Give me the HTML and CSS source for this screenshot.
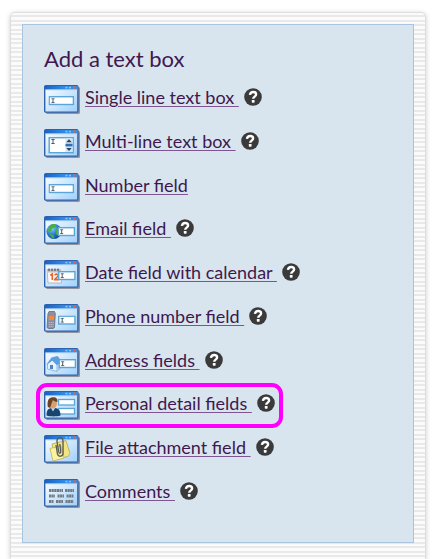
FILE: index.html
```html
<!DOCTYPE html>
<html lang="en">
<head>
    <meta charset="UTF-8">
    <meta name="viewport" content="width=device-width, initial-scale=1.0">
    <title>Add a text box</title>
    <link rel="stylesheet" href="styles.css">
</head>
<body>
    <!-- Shared icon parts -->
    <svg class="defs" width="0" height="0" aria-hidden="true">
        <defs>
            <linearGradient id="sky" x1="0" y1="0" x2="1" y2="1">
                <stop offset="0" stop-color="#ffffff"/>
                <stop offset="1" stop-color="#9fd0fb"/>
            </linearGradient>
            <linearGradient id="bar" x1="0" y1="0" x2="1" y2="0">
                <stop offset="0" stop-color="#1b62c4"/>
                <stop offset="0.6" stop-color="#2f8be8"/>
                <stop offset="1" stop-color="#3f8be0"/>
            </linearGradient>
            <radialGradient id="sea" cx="0.35" cy="0.3" r="0.8">
                <stop offset="0" stop-color="#8fd0f8"/>
                <stop offset="0.5" stop-color="#2a7fd0"/>
                <stop offset="1" stop-color="#0d3d8c"/>
            </radialGradient>
            <symbol id="window" viewBox="0 0 36 29">
                <rect x="2" y="2" width="34" height="27" rx="1.5" fill="#7c8089" opacity="0.8"/>
                <rect x="0.7" y="0.7" width="33.2" height="26.4" rx="1.2" fill="url(#sky)" stroke="#2f62ae" stroke-width="1.4"/>
                <rect x="1" y="1" width="32.6" height="3.6" fill="url(#bar)"/>
                <rect x="1.4" y="4.6" width="31.8" height="0.8" fill="#b9dcfa"/>
                <rect x="21.5" y="1.8" width="2" height="1.6" fill="#8cc4f6"/>
                <rect x="25" y="1.8" width="2" height="1.6" fill="#8cc4f6"/>
                <rect x="29" y="1.4" width="3" height="2.2" fill="#e3623c"/>
            </symbol>
            <symbol id="cursor" viewBox="0 0 4 5">
                <path d="M0.4 0.5h3.2M2 0.5v4M0.4 4.5h3.2" fill="none" stroke="#3c4652" stroke-width="0.9"/>
            </symbol>
            <symbol id="field" viewBox="0 0 26 10">
                <rect x="0.7" y="0.7" width="24.2" height="7.8" fill="#fff" stroke="#5ba6d8" stroke-width="1.4"/>
                <use href="#cursor" x="2.5" y="2.2" width="4" height="5"/>
            </symbol>
            <symbol id="small-field" viewBox="0 0 18 10">
                <rect x="0.7" y="0.7" width="16.2" height="7.8" fill="#fff" stroke="#5ba6d8" stroke-width="1.4"/>
                <use href="#cursor" x="2.2" y="2.2" width="4" height="5"/>
            </symbol>
            <symbol id="question" viewBox="0 0 18 18">
                <circle cx="9" cy="9" r="8.8" fill="#3a3a3a"/>
                <path d="M5.9 6.9C6.3 4.7 7.400 4 9.100 4c1.800 0 3 1 3 2.500 0 2.100-2.900 2.100-2.900 4.200" fill="none" stroke="#fff" stroke-width="2.400"/>
                <rect x="7.800" y="11.900" width="2.800" height="2.800" rx="0.600" fill="#fff"/>
            </symbol>
        </defs>
    </svg>

    <main class="card">
        <section class="panel">
            <h2>Add a text box</h2>
            <ul class="field-list">
                <li>
                    <svg class="icon" viewBox="0 0 36 29" aria-hidden="true">
                        <use href="#window" width="36" height="29"/>
                        <use href="#field" x="4.500" y="11" width="26" height="10"/>
                    </svg>
                    <a href="#">Single line text box </a>
                    <button class="help" aria-label="Help"><svg viewBox="0 0 18 18"><use href="#question"/></svg></button>
                </li>
                <li>
                    <svg class="icon" viewBox="0 0 36 29" aria-hidden="true">
                        <use href="#window" width="36" height="29"/>
                        <rect x="5.200" y="8.700" width="24" height="15" fill="#fff" stroke="#5ba6d8" stroke-width="1.400"/>
                        <use href="#cursor" x="7" y="10" width="4" height="5"/>
                        <rect x="21.500" y="9.400" width="7" height="13.600" fill="#cfe4f5"/>
                        <rect x="21.500" y="14.800" width="7" height="2.600" fill="#2f6fc0"/>
                        <path d="M22.300 13.200l2.700-3 2.700 3zM22.300 19l2.700 3 2.700-3z" fill="#36424e"/>
                    </svg>
                    <a href="#">Multi-line text box </a>
                    <button class="help" aria-label="Help"><svg viewBox="0 0 18 18"><use href="#question"/></svg></button>
                </li>
                <li>
                    <svg class="icon" viewBox="0 0 36 29" aria-hidden="true">
                        <use href="#window" width="36" height="29"/>
                        <use href="#field" x="4.500" y="11" width="26" height="10"/>
                    </svg>
                    <a href="#">Number field</a>
                </li>
                <li>
                    <svg class="icon" viewBox="0 0 36 29" aria-hidden="true">
                        <use href="#window" width="36" height="29"/>
                        <circle cx="10" cy="15.500" r="7.600" fill="url(#sea)"/>
                        <path d="M5 10.500c2-2.500 5-3 7-2l-1 3-3 1-1 3-3-1zM12 13l4-2.500 1.400 4-2.400 5-3-1zM5.500 18l4 1 1 3.500c-2 .2-4-1.500-5-4.500z" fill="#45b03c"/>
                        <use href="#small-field" x="13.500" y="11" width="18" height="10"/>
                    </svg>
                    <a href="#">Email field </a>
                    <button class="help" aria-label="Help"><svg viewBox="0 0 18 18"><use href="#question"/></svg></button>
                </li>
                <li>
                    <svg class="icon" viewBox="0 0 36 29" aria-hidden="true">
                        <use href="#window" width="36" height="29"/>
                        <path d="M3 9.500h13.500l1 13.500H4z" fill="#f8f8fa" stroke="#b3b8c0"/>
                        <path d="M3.500 11h13" stroke="#bcc1ca" stroke-width="3"/>
                        <path d="M5 11V8.500M8 11V8.500M11 11V8.500M14 11V8.500" stroke="#50545c" stroke-width="1.200"/>
                        <path d="M6.300 15.200l2-1.200v6M10.800 15.200c.4-1.500 3.500-1.500 3.500.4 0 1.600-3 2.400-3.500 4h4" fill="none" stroke="#ea6528" stroke-width="1.600"/>
                        <use href="#small-field" x="14" y="11" width="18" height="10"/>
                    </svg>
                    <a href="#">Date field with calendar </a>
                    <button class="help" aria-label="Help"><svg viewBox="0 0 18 18"><use href="#question"/></svg></button>
                </li>
                <li>
                    <svg class="icon" viewBox="0 0 36 29" aria-hidden="true">
                        <use href="#window" width="36" height="29"/>
                        <path d="M4 9.500l1-2h5.500l.8 2-.8 14-1.500 1H4.300l-1.300-1z" fill="#8c90a2" stroke="#666a7c" stroke-width="0.800"/>
                        <path d="M4.800 12h5.500l-.3 4H4.600z" fill="#f28a3c"/>
                        <path d="M5 18.500h5M5 20.500h5M5 22.500h4.500" stroke="#b4b8c8" stroke-dasharray="1.200 0.600"/>
                        <use href="#small-field" x="14" y="11.500" width="18" height="10"/>
                    </svg>
                    <a href="#">Phone number field </a>
                    <button class="help" aria-label="Help"><svg viewBox="0 0 18 18"><use href="#question"/></svg></button>
                </li>
                <li>
                    <svg class="icon" viewBox="0 0 36 29" aria-hidden="true">
                        <use href="#window" width="36" height="29"/>
                        <path d="M3.500 16l4.500-4 5 5v6.500L3.500 21z" fill="#e6f1fb" stroke="#7da9d6" stroke-width="0.800"/>
                        <path d="M13 17l4-3v7l-4 2.500z" fill="#a8c8e8"/>
                        <path d="M2 17L7.500 9.500 13.500 8l5 6-5.500 3L8.500 12.500z" fill="#5aa0e0"/>
                        <rect x="6" y="17" width="3" height="4" fill="#4585c8"/>
                        <use href="#small-field" x="14.500" y="11" width="18" height="10"/>
                    </svg>
                    <a href="#">Address fields </a>
                    <button class="help" aria-label="Help"><svg viewBox="0 0 18 18"><use href="#question"/></svg></button>
                </li>
                <li class="selected">
                    <svg class="icon" viewBox="0 0 36 29" aria-hidden="true">
                        <use href="#window" width="36" height="29"/>
                        <rect x="14.500" y="8.500" width="16" height="5.500" fill="#fff" stroke="#5ba6d8" stroke-width="1.300"/>
                        <rect x="14.500" y="17.500" width="16" height="5.500" fill="#fff" stroke="#5ba6d8" stroke-width="1.300"/>
                        <path d="M2.500 24.500c0-5 1.500-7 5-7.500h3.500c4 .5 5.500 3 5.500 7.500-4 1.200-10 1.200-14 0z" fill="#17456f"/>
                        <path d="M7 17l2 3.500L11.500 16.500z" fill="#c9d4de"/>
                        <ellipse cx="9" cy="12.500" rx="4" ry="5" fill="#d9a071"/>
                        <path d="M3.800 16c-1-6.500 1-10 5.200-9.800 3.500 0 5 2 4.300 4.800-2-.2-3.500-1-4.500-2-.5 2.500-2 4-2.500 8z" fill="#6b4324"/>
                    </svg>
                    <a href="#">Personal detail fields </a>
                    <button class="help" aria-label="Help"><svg viewBox="0 0 18 18"><use href="#question"/></svg></button>
                </li>
                <li>
                    <svg class="icon" viewBox="0 0 36 29" aria-hidden="true">
                        <use href="#window" width="36" height="29"/>
                        <path d="M8 9l14-3.500 4 13-2 3-13 3z" fill="#f0e584" stroke="#b9a84e" stroke-width="0.800"/>
                        <path d="M6 13.500l11-2.500 3 12-11 3z" fill="#fbf3a0" stroke="#c2b35c" stroke-width="0.800"/>
                        <path d="M12 10l1.500 9c.8 3.500 5.800 2.500 5.600-1L19 6c-.5-5-6.500-4.500-6 .5l1.800 10.500c.3 1.800 2.200 1.500 2-.3L15.800 9" fill="none" stroke="#5c5f58" stroke-width="1.400"/>
                    </svg>
                    <a href="#">File attachment field </a>
                    <button class="help" aria-label="Help"><svg viewBox="0 0 18 18"><use href="#question"/></svg></button>
                </li>
                <li>
                    <svg class="icon" viewBox="0 0 36 29" aria-hidden="true">
                        <use href="#window" width="36" height="29"/>
                        <g fill="none" stroke="#747a82" stroke-width="3">
                            <path d="M5 11.500h14M21 11.500h9" stroke-dasharray="2.200 0.400"/>
                            <path d="M5 17h6M13.500 17h6.500M22.500 17h7" stroke-dasharray="2.200 0.400"/>
                            <path d="M5 22.500h4.500M12 22.500h7M21.500 22.500h8" stroke-dasharray="2.200 0.400"/>
                        </g>
                    </svg>
                    <a href="#">Comments </a>
                    <button class="help" aria-label="Help"><svg viewBox="0 0 18 18"><use href="#question"/></svg></button>
                </li>
            </ul>
        </section>
    </main>
</body>
</html>
```
FILE: styles.css
```css
* {
    box-sizing: border-box;
}
body {
    margin: 0;
    padding: 12px 11px 0 10px;
    background-color: #fff;
    font-family: Lato, 'Open Sans', sans-serif;
    color: #40184f;
}
.defs {
    position: absolute;
}

/* Striped frame, runs down to the bottom of the window */
.card {
    min-height: calc(100vh - 12px);
    padding: 11px 11px 15px;
    border: 1px solid #dedede;
    border-bottom: none;
    border-radius: 5px 5px 0 0;
    background: repeating-linear-gradient(
        #fbfbfb 0, #fbfbfb 2px,
        #e9e9e9 2px, #e9e9e9 4px,
        #fbfbfb 4px, #fbfbfb 7px,
        #e9e9e9 7px, #e9e9e9 9px);
    box-shadow: 0 1px 5px rgba(0, 0, 0, 0.2);
}
.panel {
    padding: 20px 21px 34px;
    border: 1px solid #a9c4df;
    background-color: #d9e5ee;
}
h2 {
    margin: 0 0 12px;
    font-size: 22px;
    font-weight: 400;
    line-height: 28px;
}
.field-list {
    display: flex;
    flex-direction: column;
    justify-content: space-between;
    min-height: 423px;
    margin: 0;
    padding: 0;
    list-style: none;
}
.field-list li {
    display: flex;
    align-items: flex-start;
    align-self: flex-start;
    height: 29px;
}
.icon {
    width: 36px;
    height: 29px;
    margin-right: 5px;
}
.field-list a {
    color: #40184f;
    font-size: 18px;
    line-height: 24px;
    white-space: pre;
    text-decoration: underline;
    text-decoration-color: #7d5590;
    text-underline-offset: 2px;
}
.help {
    width: 18px;
    height: 18px;
    margin: 3px 0 0 5px;
    padding: 0;
    border: none;
    background: none;
    cursor: pointer;
}
.help svg {
    display: block;
    width: 18px;
    height: 18px;
}
.selected {
    outline: 4px solid #ff00ff;
    outline-offset: 4px;
    border-radius: 3px;
}
```
